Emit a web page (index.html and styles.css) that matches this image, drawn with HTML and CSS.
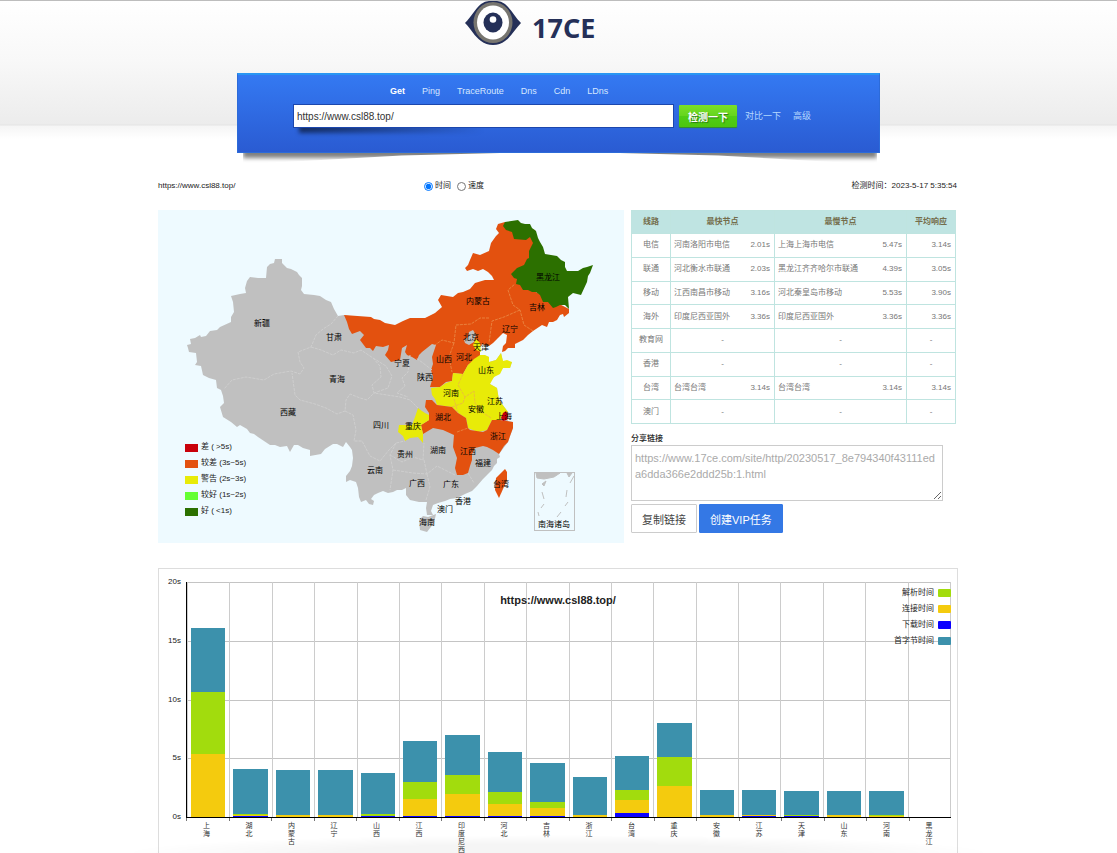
FILE: index.html
```html
<!DOCTYPE html>
<html lang="zh-CN">
<head>
<meta charset="utf-8">
<title>17CE</title>
<link rel="stylesheet" href="styles.css">
</head>
<body>
<header class="header">
  <a class="logo" href="#">
    <svg class="logo-eye" viewBox="0 0 58 45" aria-hidden="true">
      <path fill="#253058" d="M1 22C7 16 11 8 17 3Q21 0 25 0H33Q37 0 41 3C47 8 51 16 57 22C51 28 47 36 41 40Q36 44 29 44Q22 44 17 40C11 36 7 28 1 22Z"/>
      <ellipse cx="29" cy="21.500" rx="19.500" ry="20.500" fill="#77756f"/>
      <ellipse cx="29" cy="21.500" rx="16" ry="17" fill="#fff"/>
      <ellipse cx="29" cy="21.500" rx="9.500" ry="10" fill="#253058"/>
      <circle cx="29" cy="18.500" r="3.300" fill="#fff"/>
    </svg>
    <span class="logo-name">17CE</span>
  </a>
  <form class="banner">
    <nav class="tabs">
      <a class="active" href="#">Get</a><a href="#">Ping</a><a href="#">TraceRoute</a><a href="#">Dns</a><a href="#">Cdn</a><a href="#">LDns</a>
    </nav>
    <div class="search">
      <div class="search-box"><input type="text" aria-label="URL" value="https://www.csl88.top/"></div>
      <button type="button">检测一下</button>
      <a href="#">对比一下</a>
      <a href="#">高级</a>
    </div>
  </form>
</header>

<main class="page">
  <div class="summary">
    <span>https://www.csl88.top/</span>
    <div class="modes">
      <label><input type="radio" name="mode" checked>时间</label>
      <label><input type="radio" name="mode">速度</label>
    </div>
    <span>检测时间：2023-5-17 5:35:54</span>
  </div>

  <div class="results">
    <svg class="map" viewBox="158 210 466 333" role="img" aria-label="中国">
      <path class="land" d="M275 259L282 259L282 263L287 268L291 269L297 272L299 275L302 278L302 286L301 290L304 294L314 295L320 296L326 300L331 302L334 309L338 316L344 315L371 320L385 326L400 328L430 328L452 335L470 330L490 340L480 347L480 355L483 355L489 357L489 362L496 360L501 353L503 362L512 362L510 368L503 368L497 374L490 381L490 384L497 388L499 400L505 408L508 412L508 421L513 422L513 428L508 442L499 454L500 457L497 459L497 463L494 466L492 470L488 474L483 479L477 486L472 491L465 494L457 498L450 499L445 501L438 503L433 505L431 511L433 515L427 515L426 508L427 502L419 502L410 500L406 495L406 488L402 490L397 490L393 492L388 493L383 491L378 493L374 495L371 499L374 501L373 505L369 504L366 500L361 502L359 497L358 488L356 482L350 480L346 482L346 476L350 471L352 466L353 458L352 450L350 447L346 442L343 447L337 444L333 444L325 449L321 454L310 456L310 450L303 448L298 445L294 445L290 452L287 446L280 447L275 445L270 445L264 441L258 437L254 434L250 433L247 429L240 425L237 427L231 422L223 417L220 407L224 403L223 396L221 390L217 388L216 380L209 378L203 375L201 366L195 365L197 362L196 353L189 352L188 348L187 345L191 344L190 339L195 338L200 335L201 337L206 336L210 331L217 330L220 327L231 322L231 317L234 312L233 302L231 296L240 294L246 293L245 288L247 281L250 277L258 278L266 278L267 267L270 264L274 263Z"/>
      <path class="land" d="M423 516L428 517L436 514L434 523L427 532L420 530L419 520Z"/>
      <path class="bad" d="M344 315L371 317L374 319L380 320L385 323L390 324L395 325L403 321L410 318L425 318L435 313L442 307L438 300L441 295L447 296L453 297L458 293L463 292L470 289L475 283L485 280L494 280L492 276L488 272L483 269L478 271L473 269L467 271L465 268L468 265L470 260L473 253L480 255L489 251L491 243L496 236L499 233L496 229L498 224L505 222L535 230L540 260L520 275L530 289L569 309L569 313L564 317L563 314L560 315L557 320L553 322L549 322L547 327L542 325L533 331L528 335L523 340L515 344L515 348L508 348L505 351L502 352L503 346L506 343L507 335L503 333L498 338L493 343L489 346L482 344L480 347L480 357L472 362L468 365L463 374L453 373L452 381L446 382L440 387L430 387L433 377L431 370L433 364L432 357L436 345L432 344L427 348L422 352L419 355L417 360L412 357L407 355L405 352L407 345L402 348L400 360L391 362L385 355L388 350L389 345L383 347L376 346L373 351L370 348L366 348L360 340L364 335L360 331L352 334L349 329L347 322Z"/>
      <path class="good" d="M505 222L518 220L521 223L525 224L530 224L532 228L536 231L538 238L540 242L543 247L545 254L551 255L557 256L561 260L565 262L565 267L567 271L578 271L583 268L587 267L593 265L590 273L588 276L587 282L581 295L573 293L568 297L569 309L565 305L560 305L556 307L553 308L548 302L543 302L540 295L536 292L532 292L528 290L523 290L520 285L516 284L517 279L514 278L511 274L517 268L524 265L527 259L529 258L529 251L533 243L530 237L526 240L514 239L512 232L506 230L503 226Z"/>
      <path class="warn" d="M453 373L463 374L468 365L474 359L480 355L485 355L489 357L489 362L496 360L501 353L503 361L507 360L512 362L510 368L503 368L500 374L494 377L490 384L497 388L499 400L505 408L508 412L503 414L500 420L492 420L487 430L478 432L468 428L466 418L458 413L452 407L437 405L435 399L432 395L431 388L440 387L446 383L452 381Z"/>
      <path class="bad" d="M426 400L432 400L437 405L452 407L458 413L466 418L468 428L470 430L483 432L487 430L492 420L500 420L513 422L513 428L510 436L508 442L504 446L499 454L493 450L487 447L483 446L475 448L472 454L472 460L470 466L468 473L463 475L457 475L455 468L457 458L453 447L454 435L443 430L433 428L423 434L421 425L429 420L429 413L425 407Z"/>
      <path class="warn" d="M418 408L422 411L425 413L429 415L429 420L421 425L423 434L423 443L418 437L410 438L405 441L403 436L398 432L399 425L405 425L412 425L415 417ZM476 339L480 343L481 352L476 350L473 345Z"/>
      <path class="bad" d="M505 469L507 472L507 480L503 489L499 498L495 490L496 478Z"/>
      <path class="worst" d="M503 413L506 411L508 415L507 420L503 421L501 418Z"/>
      <path class="land" d="M464 340L468 337L469 332L473 330L476 335L474 342L469 345L465 343Z"/>
      <g class="borders">
        <path d="M338 316L331 324L323 329L316 335L311 347L298 352L300 362L304 368L300 374L291 371L274 374L264 380L246 377L232 380L224 389"/>
        <path d="M311 347L321 350L333 355L341 350L354 353L361 350L373 358L380 366L381 377L372 385L374 393L367 400L360 398L350 394L346 400L345 411L337 414L326 408L315 404L300 400L295 395L292 373M345 411L353 415L356 430L354 441L362 441L370 456L380 461L389 450L396 443L405 441M373 358L386 366L392 376L388 388L374 393L387 395L400 397L410 400L418 408M410 355L408 372L402 378L405 386L397 393L408 397M432 370L423 363L416 358M396 443L390 455L393 470L390 490M390 455L402 462L413 457L423 460L424 443M413 473L427 474L437 466L455 475M393 470L413 473M424 460L427 474M427 474L430 487L426 500M468 473L474 483"/>
        <path class="pale" d="M533 331L524 325L520 310L513 305L508 290L515 284M520 310L504 317L492 321L489 343M489 318L480 318L471 324L456 325L454 343L442 340L435 345M454 343L449 357L452 372M463 374L458 385L465 397L474 391L475 403L482 412L491 418M452 407L463 403L465 397M458 413L454 399M457 432L468 428"/>
      </g>
      <g class="inset">
        <rect x="534.500" y="472.500" width="40" height="58"/>
        <path d="M536 473H560L554 477L544 479L537 478ZM567 473H572L569 477ZM542 484L546 481L544 486ZM542 492L544 499M567 490L566 497M544 504L541 508M568 502L565 506M538 512L539 516M561 512L557 517M574 476L570 483"/>
      </g>
      <g class="names">
        <text x="262" y="326">新疆</text><text x="334" y="340">甘肃</text><text x="337" y="382">青海</text><text x="288" y="415">西藏</text><text x="381" y="428">四川</text><text x="375" y="473">云南</text>
        <text x="548" y="280">黑龙江</text><text x="478" y="304">内蒙古</text><text x="537" y="310">吉林</text><text x="510" y="332">辽宁</text><text x="471" y="340">北京</text><text x="481" y="350">天津</text>
        <text x="402" y="366">宁夏</text><text x="444" y="362">山西</text><text x="464" y="360">河北</text><text x="486" y="373">山东</text><text x="425" y="380">陕西</text><text x="451" y="396">河南</text>
        <text x="495" y="404">江苏</text><text x="476" y="412">安徽</text><text x="504" y="419">上海</text><text x="443" y="420">湖北</text><text x="413" y="429">重庆</text><text x="498" y="439">浙江</text>
        <text x="468" y="454">江西</text><text x="438" y="453">湖南</text><text x="483" y="466">福建</text><text x="405" y="457">贵州</text><text x="451" y="487">广东</text><text x="417" y="486">广西</text>
        <text x="463" y="504">香港</text><text x="445" y="512">澳门</text><text x="427" y="525">海南</text><text x="501" y="487">台湾</text><text x="554" y="527">南海诸岛</text>
      </g>
      <g class="key">
        <rect class="worst" x="185" y="444" width="13" height="8"/><text x="201" y="449">差 ( &gt;5s)</text>
        <rect class="bad" x="185" y="460" width="13" height="8"/><text x="201" y="465">较差 (3s~5s)</text>
        <rect class="warn" x="185" y="476" width="13" height="8"/><text x="201" y="481">警告 (2s~3s)</text>
        <rect class="fine" x="185" y="492" width="13" height="8"/><text x="201" y="497">较好 (1s~2s)</text>
        <rect class="good" x="185" y="508" width="13" height="8"/><text x="201" y="513">好 ( &lt;1s)</text>
      </g>
    </svg>

    <section class="side">
      <table class="lines">
        <colgroup><col class="c-line"><col class="c-fast"><col class="c-time"><col class="c-slow"><col class="c-time"><col class="c-avg"></colgroup>
        <thead><tr><th>线路</th><th colspan="2">最快节点</th><th colspan="2">最慢节点</th><th>平均响应</th></tr></thead>
        <tbody>
          <tr><th>电信</th><td class="node">河南洛阳市电信</td><td class="time">2.01s</td><td class="node">上海上海市电信</td><td class="time">5.47s</td><td class="avg">3.14s</td></tr>
          <tr><th>联通</th><td class="node">河北衡水市联通</td><td class="time">2.03s</td><td class="node">黑龙江齐齐哈尔市联通</td><td class="time">4.39s</td><td class="avg">3.05s</td></tr>
          <tr><th>移动</th><td class="node">江西南昌市移动</td><td class="time">3.16s</td><td class="node">河北秦皇岛市移动</td><td class="time">5.53s</td><td class="avg">3.90s</td></tr>
          <tr><th>海外</th><td class="node">印度尼西亚国外</td><td class="time">3.36s</td><td class="node">印度尼西亚国外</td><td class="time">3.36s</td><td class="avg">3.36s</td></tr>
          <tr><th>教育网</th><td colspan="2">-</td><td colspan="2">-</td><td>-</td></tr>
          <tr><th>香港</th><td colspan="2">-</td><td colspan="2">-</td><td>-</td></tr>
          <tr><th>台湾</th><td class="node">台湾台湾</td><td class="time">3.14s</td><td class="node">台湾台湾</td><td class="time">3.14s</td><td class="avg">3.14s</td></tr>
          <tr><th>澳门</th><td colspan="2">-</td><td colspan="2">-</td><td>-</td></tr>
        </tbody>
      </table>
      <label class="share-label" for="share">分享链接</label>
      <textarea class="share" id="share">https://www.17ce.com/site/http/20230517_8e794340f43111eda6dda366e2ddd25b:1.html</textarea>
      <div class="actions">
        <button class="copy" type="button">复制链接</button>
        <button class="vip" type="button">创建VIP任务</button>
      </div>
    </section>
  </div>

  <section class="chart">
    <div class="scale"><span>20s</span><span>15s</span><span>10s</span><span>5s</span><span>0s</span></div>
    <div class="plot">
      <div class="rules"><i></i><i></i><i></i><i></i></div>
      <h2 class="chart-title">https://www.csl88.top/</h2>
      <ul class="legend">
        <li>解析时间<i class="dns"></i></li><li>连接时间<i class="connect"></i></li><li>下载时间<i class="load"></i></li><li>首字节时间<i class="first"></i></li>
      </ul>
      <div class="bars">
        <div class="bar"><i class="first" style="height:64px"></i><i class="dns" style="height:62px"></i><i class="connect" style="height:63px"></i></div>
        <div class="bar"><i class="first" style="height:45px"></i><i class="dns" style="height:1px"></i><i class="connect" style="height:1px"></i><i class="load" style="height:1px"></i></div>
        <div class="bar"><i class="first" style="height:45px"></i><i class="connect" style="height:2px"></i></div>
        <div class="bar"><i class="first" style="height:45px"></i><i class="connect" style="height:2px"></i></div>
        <div class="bar"><i class="first" style="height:41px"></i><i class="dns" style="height:2px"></i><i class="load" style="height:1px"></i></div>
        <div class="bar"><i class="first" style="height:41px"></i><i class="dns" style="height:17px"></i><i class="connect" style="height:17px"></i><i class="load" style="height:1px"></i></div>
        <div class="bar"><i class="first" style="height:40px"></i><i class="dns" style="height:19px"></i><i class="connect" style="height:22px"></i><i class="load" style="height:1px"></i></div>
        <div class="bar"><i class="first" style="height:40px"></i><i class="dns" style="height:12px"></i><i class="connect" style="height:12px"></i><i class="load" style="height:1px"></i></div>
        <div class="bar"><i class="first" style="height:39px"></i><i class="dns" style="height:6px"></i><i class="connect" style="height:8px"></i><i class="load" style="height:1px"></i></div>
        <div class="bar"><i class="first" style="height:38px"></i><i class="connect" style="height:2px"></i></div>
        <div class="bar"><i class="first" style="height:34px"></i><i class="dns" style="height:10px"></i><i class="connect" style="height:13px"></i><i class="load" style="height:4px"></i></div>
        <div class="bar"><i class="first" style="height:34px"></i><i class="dns" style="height:29px"></i><i class="connect" style="height:31px"></i></div>
        <div class="bar"><i class="first" style="height:25px"></i><i class="connect" style="height:2px"></i></div>
        <div class="bar"><i class="first" style="height:25px"></i><i class="connect" style="height:1px"></i><i class="load" style="height:1px"></i></div>
        <div class="bar"><i class="first" style="height:24px"></i><i class="dns" style="height:1px"></i><i class="load" style="height:1px"></i></div>
        <div class="bar"><i class="first" style="height:24px"></i><i class="connect" style="height:2px"></i></div>
        <div class="bar"><i class="first" style="height:24px"></i><i class="dns" style="height:1px"></i><i class="connect" style="height:1px"></i></div>
        <div class="bar"></div>
      </div>
    </div>
    <div class="places">
      <span>上海</span><span>湖北</span><span>内蒙古</span><span>辽宁</span><span>山西</span><span>江西</span><span>印度尼西</span><span>河北</span><span>吉林</span><span>浙江</span><span>台湾</span><span>重庆</span><span>安徽</span><span>江苏</span><span>天津</span><span>山东</span><span>河南</span><span>黑龙江</span>
    </div>
  </section>
</main>
</body>
</html>
```
FILE: styles.css
```css
* { box-sizing: border-box; }

body {
  margin: 0;
  height: 100vh;
  overflow: hidden;
  background: #fff;
  color: #222;
  font: 8px/12px "Liberation Sans", "Noto Sans CJK SC", sans-serif;
}

body::after {
  content: "";
  position: fixed;
  left: 11%;
  right: 11%;
  bottom: 0;
  height: 18px;
  background: radial-gradient(50% 100% at 50% 100%, rgba(0, 0, 0, 0.04) 50%, rgba(0, 0, 0, 0));
  pointer-events: none;
}

a { color: inherit; text-decoration: none; }
button, input, textarea { font-family: inherit; }

/* Header */
.header {
  display: flex;
  flex-direction: column;
  align-items: center;
  padding: 0 16px;
  border-top: 1px solid #bdbdbd;
  background: linear-gradient(#fff 0, #f8f8f8 60px, #ececec 123px, #e4e4e4 124px, #f5f5f5 125px, #fff 138px);
}

.logo { display: flex; gap: 10px; height: 45px; margin-right: 121px; }
.logo-eye { width: 58px; height: 45px; }
.logo-name {
  width: 0;
  padding-top: 8px;
  color: #253058;
  font: bold 27px/38px "Noto Sans", sans-serif;
}

.banner {
  position: relative;
  z-index: 0;
  width: 100%;
  max-width: 643px;
  height: 80px;
  margin-top: 27px;
}
.banner::before {
  content: "";
  position: absolute;
  z-index: -1;
  inset: 0;
  border: 1px solid #2c6bd9;
  border-top: 2px solid #2996f3;
  background: linear-gradient(#3479f2, #2a5bd2);
}
.banner::after {
  content: "";
  position: absolute;
  z-index: -2;
  inset: 20px 3px -5px 6px;
  background: rgba(0, 0, 0, 0.5);
  clip-path: polygon(0 0, 100% 0, 100% 110%, 75% 96%, 50% 90%, 25% 96%, 0 110%);
  filter: blur(2px);
}

.tabs {
  display: flex;
  gap: 17px;
  padding: 12px 0 0 153px;
  color: #d5e7ff;
  font-size: 9px;
}
.tabs .active { color: #fff; font-weight: bold; }

.search {
  display: flex;
  align-items: center;
  padding: 7px 0 0 56px;
  color: #b5d8ff;
  font-size: 9px;
}
.search-box { position: relative; z-index: 0; flex: 0 1 381px; }
.search-box::after {
  content: "";
  position: absolute;
  z-index: -1;
  inset: 10px 50% -5px 6px;
  background: linear-gradient(90deg, rgba(0, 0, 0, 0.55), rgba(0, 0, 0, 0));
  filter: blur(2px);
}
.search input {
  display: block;
  width: 100%;
  height: 24px;
  padding: 0 3px;
  border: 1px solid #1c47ad;
  background: #fff;
  color: #333;
  font-size: 10px;
}
.search button {
  width: 58px;
  height: 22px;
  margin: 0 8px 0 5px;
  padding: 0;
  border: 0;
  border-radius: 1px;
  background: linear-gradient(#7be026, #66d51f 48%, #50cd16 52%, #4cc60f);
  box-shadow: 0 1px 1px #348f22;
  color: #fff;
  font-size: 10px;
  font-weight: bold;
  text-shadow: 1px 1px 1px #287514;
}
.search a + a { margin-left: 12px; }

/* Results */
.page { max-width: 801px; margin: 0 auto; }

.summary {
  display: grid;
  grid-template-columns: 266px 1fr auto;
  align-items: center;
  height: 14px;
  margin: 26px 2px 17px 0;
}
.modes, .modes label { display: flex; align-items: center; }
.modes { gap: 6px; }
.modes label { gap: 2px; }
.modes input { width: 9px; height: 9px; margin: 0; }

.results {
  display: grid;
  grid-template-columns: minmax(0, 466fr) minmax(0, 328fr);
  gap: 7px;
  align-items: start;
}

.map { display: block; width: 100%; background: #eefaff; }
.land { fill: #c0c0c0; }
.worst { fill: #c9000a; }
.bad { fill: #e3510f; }
.warn { fill: #e8eb08; }
.fine { fill: #65ff33; }
.good { fill: #2c7000; }
.borders { fill: none; stroke: #cecece; stroke-width: 1px; stroke-dasharray: 3 1; }
.borders .pale { stroke: #eda05c; opacity: 0.6; }
.inset { fill: none; stroke: #c0c0c0; }
.inset path { fill: #c0c0c0; }
.names, .key { font-size: 8px; fill: #000; }
.names { text-anchor: middle; }
.key text { font-size: 8px; fill: #222; }

.side { padding-right: 3px; }

.lines {
  width: 100%;
  height: 214px;
  border-collapse: collapse;
  table-layout: fixed;
  color: #777;
}
.lines tr { height: 23px; }
.c-line { width: 39px; }
.c-fast { width: 74px; }
.c-time { width: 30px; }
.c-avg { width: 49px; }
.lines th, .lines td {
  padding: 0;
  border: 1px solid #bfe4e0;
  font-weight: normal;
  text-align: center;
}
.lines thead th { background: #bfe4e2; color: #746d4c; font-weight: bold; }
.lines .node { padding-left: 3px; border-right: 0; text-align: left; white-space: nowrap; }
.lines .time { padding-right: 4px; border-left: 0; text-align: right; }
.lines .avg { padding-right: 4px; text-align: right; }

.share-label { display: block; margin-top: 9px; font-weight: 500; }
.share {
  display: block;
  width: 312px;
  max-width: 100%;
  height: 56px;
  padding: 4px 3px;
  border: 1px solid #ccc;
  color: #aaa;
  font-size: 11px;
  line-height: 16px;
  word-break: break-all;
}
.actions { display: flex; gap: 2px; margin-top: 3px; }
.actions button {
  height: 29px;
  padding: 0 10px;
  border: 1px solid #ccc;
  border-radius: 1px;
  background: #fff;
  color: #444;
  font-size: 11px;
}
.actions .vip { border-color: #3478e5; background: #3478e5; color: #fff; }

/* Chart */
.chart {
  display: grid;
  grid-template-columns: 27px minmax(0, 1fr);
  margin: 25px 1px 0 0;
  padding: 13px 6px 0 0;
  border: 1px solid #ddd;
  border-bottom: 0;
}
.scale {
  display: flex;
  flex-direction: column;
  justify-content: space-between;
  height: 243px;
  margin: -4px 0 -4px;
  padding-right: 5px;
  line-height: 8px;
  text-align: right;
}
.plot { position: relative; height: 236px; border-bottom: 1px solid #000; border-left: 1px solid #000; }
.rules { position: absolute; inset: 0; display: grid; grid-template-rows: repeat(4, 1fr); }
.rules i { border-top: 1px solid #c4c4c4; }
.bars {
  position: relative;
  display: grid;
  grid-template-columns: repeat(18, minmax(0, 1fr));
  height: 100%;
  border-right: 1px solid #ccc;
}
.bar { display: flex; flex-direction: column; justify-content: flex-end; padding: 0 4px 0 3px; border-left: 1px solid #ccc; }
.bar i { display: block; }
.first { background: #3c91ac; }
.dns { background: #a2dc0d; }
.connect { background: #f4cb0e; }
.load { background: #0a00ff; }
.chart-title {
  position: absolute;
  z-index: 1;
  top: 11px;
  left: 0;
  right: 22px;
  margin: 0;
  font-size: 11px;
  line-height: 14px;
  text-align: center;
}
.legend {
  position: absolute;
  z-index: 1;
  top: 3px;
  right: 0;
  margin: 0;
  padding: 0;
  list-style: none;
  line-height: 16px;
}
.legend li { display: flex; align-items: center; justify-content: flex-end; gap: 4px; }
.legend i { width: 13px; height: 8px; border-radius: 1px; }
.places {
  grid-column: 2;
  display: grid;
  grid-template-columns: repeat(18, minmax(0, 1fr));
  font-size: 7px;
  line-height: 8px;
  color: #333;
}
.places span {
  padding: 4px 18px 0 17px;
  background: linear-gradient(#777, #777) 0 0 / 1px 3px no-repeat;
  word-break: break-all;
}
```
